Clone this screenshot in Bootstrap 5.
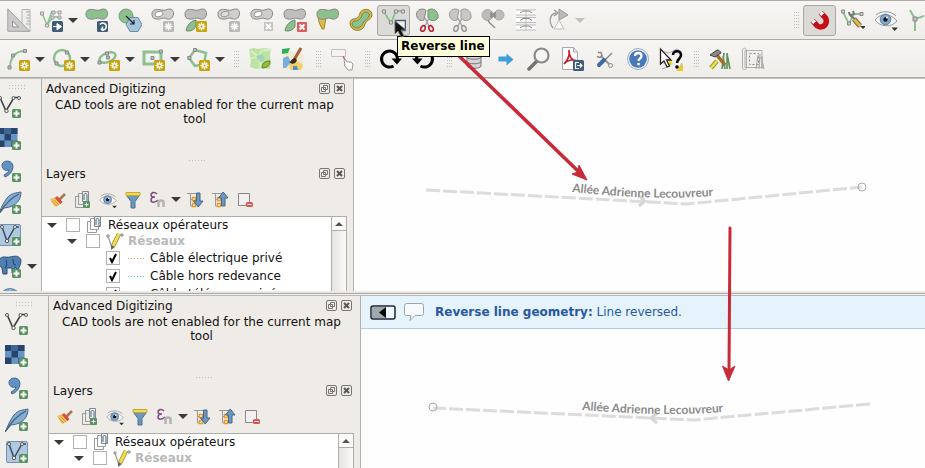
<!DOCTYPE html>
<html lang="fr">
<head>
<meta charset="utf-8">
<meta name="viewport" content="width=device-width, initial-scale=1">
<title>Reverse line</title>
<link href="https://cdn.jsdelivr.net/npm/bootstrap@5.3.0/dist/css/bootstrap.min.css" rel="stylesheet">
<style>
  body { font: 12px/14px "DejaVu Sans", sans-serif; color: #111; background: #efece8; }
  button, input { font: inherit; }
  svg { display: block; flex: none; }
  .ico { width: 24px; height: 24px; }
  .ico-s { width: 18px; height: 18px; }
  .bar { background: linear-gradient(#f8f6f4, #efedea); border-bottom: 1px solid #aeaba8; overflow: hidden; padding-left: 2px; }
  .bar-a { border-top: 1px solid #aeaba8; height: 40px; }
  .bar-b { height: 38px; padding-top: 1px; }
  .bar-end { height: 1px; background: #c4c1be; }
  .tool { flex: none; width: 33px; height: 31px; padding: 0; border: 1px solid transparent; border-radius: 3px; background: none; display: flex; align-items: center; justify-content: center; overflow: hidden; }
  .tool.down { background: #dcdad7; border-color: #aaa7a3; }
  .drop { flex: none; width: 12px; height: 31px; padding: 0; border: 0; background: none; display: flex; align-items: center; justify-content: center; }
  .bar .drop { padding-right: 2px; }
  .drop::before, .fold::before { content: ""; border: 5px solid transparent; border-top-color: #3b3a38; border-bottom: 0; }
  .drop.off::before { border-top-color: #c3c1be; }
  .tail { width: 23px; justify-content: flex-start; }
  .grip { flex: none; width: 16px; height: 17px; padding-left: 7px; }
  .grip::before, .grip-h { content: ""; display: block; width: 5px; height: 17px; background: conic-gradient(from 270deg at 1px 1px, #c0bdb9 90deg, transparent 0) 0 0 / 2px 3px; }
  .grip-h { width: 17px; height: 4px; background-size: 3px 3px; }
  .dock .grip-h { height: 1px; margin-bottom: 3px; }
  .pane { min-height: 0; overflow: hidden; }
  .pane-a { flex: 212 1 0; margin-left: -7px; }
  .pane-b { flex: 172 1 0; }
  .gap-strip { height: 5px; background: #eae8e4; border-bottom: 1px solid #bbb8b5; box-shadow: inset 0 -1px #f4f2f0, inset 0 -2px #aaa7a4; z-index: 1; }
  .side { flex: none; width: 48px; background: #f1efec; }
  .side .tool { height: 32px; }
  .side .grip-h { margin: 6px 0 2px 16px; }
  .dock { flex: none; width: 313px; border: solid #b3b0ac; border-width: 0 1px; }
  .dock-title { height: 19px; padding: 0 8px 0 4px; }
  .dock-note { height: 62px; padding: 0 14px 0 8px; text-align: center; }
  .dock-tools { height: 33px; padding-left: 3px; }
  .dock-tools .tool { width: 25px; height: 24px; }
  .mini { width: 11px; height: 11px; padding: 0; border: 0; background: none; }
  .tree { width: 305px; border: 1px solid #b0ada9; border-left: 0; background: #fff; }
  .tree ul { list-style: none; margin: 0; padding: 0; min-width: 0; }
  .tree li { display: flex; align-items: center; white-space: nowrap; height: 18px; padding-left: 64px; }
  .tree li.lv1 { height: 16px; padding-left: 4px; }
  .tree li.lv2 { height: 16px; padding-left: 24px; color: #b9b9b9; font-weight: bold; }
  .tree li.lv1 label, .tree li.lv2 label { margin-left: 4px; }
  .fold { width: 12px; height: 12px; padding: 0; border: 0; background: none; display: flex; align-items: center; justify-content: center; margin-right: 8px; }
  .tick { appearance: none; flex: none; width: 14px; height: 14px; margin: 0 6px 0 0; border: 1px solid #b3b1ad; background: #fff; }
  .tick:checked { background: #fff url("data:image/svg+xml,%3Csvg xmlns='http://www.w3.org/2000/svg' viewBox='0 0 12 12'%3E%3Cpath d='M3 6l2 4L9 2' fill='none' stroke='%23000' stroke-width='2'/%3E%3C/svg%3E"); }
  .tree label { margin-left: 5px; }
  .dash { width: 17px; height: 1px; background: repeating-linear-gradient(90deg, #cfae4e 0 1px, #fff 1px 3px); }
  .dash.blue { background: repeating-linear-gradient(90deg, #4fbfdc 0 1px, #fff 1px 3px); }
  .scroller { width: 15px; border-left: 1px solid #b0ada9; background: linear-gradient(90deg, #e6e4e1, #fbfaf9); }
  .scroller button { width: 14px; height: 14px; padding: 0; border: 0; border-bottom: 1px solid #b0ada9; background: #fbfaf9; display: flex; align-items: center; justify-content: center; }
  .scroller button::before { content: ""; border: 4px solid transparent; border-bottom-color: #555; border-top: 0; }
  .canvas { background: #fefefe; min-width: 0; }
  .map-art { left: 0; top: 0; width: 100%; height: 100%; }
  .map-art text { font: bold 12px Lato, sans-serif; fill: #8b8b8b; }
  .message { height: 33px; background: #e4f3fc; border-bottom: 1px solid #b4cce0; color: #2a57a0; padding-left: 9px; }
  .bubble { margin: 0 10px 0 7px; }
  .tip { left: 397px; top: 36px; padding: 2px 4px 3px 3px; background: #ffffdc; border: 1px solid #000; color: #000; font-weight: bold; z-index: 5; }
  .pointer { left: 394px; top: 20px; width: 13px; height: 18px; z-index: 6; }
  .arrows { left: 0; top: 0; width: 925px; height: 468px; z-index: 4; pointer-events: none; }
</style>
<script src="https://cdn.jsdelivr.net/npm/bootstrap@5.3.0/dist/js/bootstrap.bundle.min.js" defer></script>
</head>
<body class="vh-100 overflow-hidden d-flex flex-column position-relative">

<svg width="0" height="0" class="position-absolute" aria-hidden="true">
  <defs>
    <g id="gold"><rect x="12" y="13" width="11" height="11" rx="1.5" fill="#c8a20a"/><path d="M17.500 14.500v8M13.500 18.500h8M14.700 15.700l5.600 5.600M20.300 15.700l-5.600 5.600" stroke="#fff" stroke-width="1.300"/><circle cx="17.500" cy="18.500" r="1.500" fill="#c8a20a" stroke="#fff"/></g>
    <g id="greystar"><rect x="12" y="13" width="11" height="11" rx="1.500" fill="#b9b8b6"/><path d="M17.500 14.500v8M13.500 18.500h8M14.700 15.700l5.600 5.600M20.300 15.700l-5.600 5.600" stroke="#fff" stroke-width="1.300"/></g>
    <g id="navy"><rect x="12" y="13" width="11" height="11" rx="1.500" fill="#3f5d76"/></g>
    <g id="plus"><rect x="14" y="14" width="9" height="9" rx="1.500" fill="#5a9361"/><path d="M18.500 15.500v6M15.500 18.500h6" stroke="#fff" stroke-width="2"/></g>
    <path id="blob" d="M1 6C1 2 4 1 8 1.500C11 2 13 3 16 1.500C20 0 23 2 22.500 6C22 11 18 12 15 10.500C12 9 9 12 5 11C2 10.500 1 9 1 6Z" stroke="#8a8886"/>
    <path id="leaf" d="M12 12C7 13 3 17 2 22.500C5 24 11 22 12 18Z" fill="#8cc08f" stroke="#67886a"/>
    <g id="cut" fill="none" stroke-width="1.600"><path d="M10 10L14.500 19M14 10L9.500 19" stroke="#aaa"/><ellipse cx="8" cy="20.500" rx="2" ry="3" transform="rotate(25 8 20.500)"/><ellipse cx="16" cy="20.500" rx="2" ry="3" transform="rotate(-25 16 20.500)"/></g>
  </defs>
  <symbol id="i-ruler" viewBox="0 0 24 24"><path d="M15 1.500H23V23H15z" fill="#eee" stroke="#b5b3b1"/><path d="M19 4h4M20 7h3M19 10h4M20 13h3M19 16h4" stroke="#aaa"/><path d="M.800.800V23.300H22.800z" fill="#ccc" stroke="#a3a2a0"/><path d="M5.500 13v6h6z" fill="#f3f1ef" stroke="#908f8d"/></symbol>
  <symbol id="i-vmove" viewBox="0 0 24 24"><path d="M2 5l5 12 5-14M7 17l6-8 8 0" fill="none" stroke="#8cc08f" stroke-width="1.500"/><path d="M13 4h6" stroke="#bbb"/><g fill="#ddd" stroke="#999"><path d="M.500 4h3v3h-3zM12 3h3v3h-3zM18 3h3v3h-3zM11 8h3v3h-3zM18 8h3v3h-3zM5.500 16h3v3h-3z"/></g><use href="#navy"/><path d="M13 18.500h4v-3l4.500 3-4.500 3.500v-3.500z" fill="#fff" stroke="#fff"/></symbol>
  <symbol id="i-rotate" viewBox="0 0 24 24"><use href="#blob" fill="#8cc08f"/><use href="#navy"/><path d="M15 16.500a3.500 3.500 0 1 1 2 5.500l-1-1.500M17.500 22v-3.500" fill="none" stroke="#fff" stroke-width="1.500"/></symbol>
  <symbol id="i-simplify" viewBox="0 0 24 24"><circle cx="8" cy="8" r="7" fill="#8cc08f" stroke="#789d7a"/><path d="M12 9.500h8l4 7-4 7h-8l-4-7z" fill="#a5c5dd" stroke="#6b8ca5"/><path d="M8 8l8 8M16 12v4h-4" fill="none" stroke="#222" stroke-width="1.200"/></symbol>
  <symbol id="i-ring" viewBox="0 0 24 24"><use href="#blob" fill="#cfcecc"/><ellipse cx="8" cy="6" rx="4" ry="2.600" fill="#fff" stroke="#999" transform="rotate(-15 8 6)"/><use href="#greystar"/></symbol>
  <symbol id="i-part" viewBox="0 0 24 24"><use href="#blob" fill="#bfbebc"/><use href="#leaf"/><use href="#gold"/></symbol>
  <symbol id="i-fill" viewBox="0 0 24 24"><use href="#blob" fill="#cfcecc"/><ellipse cx="8" cy="6" rx="4" ry="2.600" fill="#ddd" stroke="#999" transform="rotate(-15 8 6)"/><use href="#greystar"/></symbol>
  <symbol id="i-delring" viewBox="0 0 24 24"><use href="#blob" fill="#cfcecc"/><ellipse cx="8" cy="6" rx="4" ry="2.600" fill="#fff" stroke="#999" transform="rotate(-15 8 6)"/><path d="M14 14h9v9h-9z" fill="#c6c4c2"/><path d="M16 16l5 5m0-5l-5 5" stroke="#fff" stroke-width="2"/></symbol>
  <symbol id="i-delpart" viewBox="0 0 24 24"><use href="#blob" fill="#bfbebc"/><use href="#leaf"/><rect x="14" y="14" width="10" height="10" rx="1" fill="#dc5d5b"/><path d="M16.500 16.500l5 5m0-5l-5 5" stroke="#fff" stroke-width="2"/></symbol>
  <symbol id="i-reshape" viewBox="0 0 24 24"><path d="M2 9l1 5 3 7h2l2-11z" fill="#d9bb4e" stroke="#a68a28"/><use href="#blob" fill="#8cc08f"/></symbol>
  <symbol id="i-offset" viewBox="0 0 24 24"><path d="M4 11C8 11 10 9 11 5C13 0 22 0 23 6C23 12 18 11 16 16C15 22 8 24 4 21C0 18 0 12 4 11Z" fill="#d9b93a" stroke="#8c7d40"/><path d="M6 13C10 13 12 10 13 7C14 3 20 3 20.500 7C20 11 16 11 14 15C13 19 8 21 5 19C2 17 3 13 6 13Z" fill="#8cc08f" stroke="#6d8b5d"/></symbol>
  <symbol id="i-reverse" viewBox="0 0 24 24"><path d="M2 4l7 11 5-12h8" fill="none" stroke="#8cc08f" stroke-width="1.800"/><g fill="#ddd" stroke="#888"><path d="M.500 2h3v3h-3zM12.500 2h3v3h-3zM19.500 2h3v3h-3zM7.500 13h3v3h-3z"/></g><path d="M13.500 12.500h10v10h-10z" fill="#eee" stroke="#3f5d76" stroke-width="1.500"/></symbol>
  <symbol id="i-split" viewBox="0 0 24 24"><path d="M11 2L9 12C5 14 1 10 1.500 6C2 1 7 0 11 2z" fill="#bdbcba" stroke="#8a8886"/><path d="M13 2v8c3 4 8 3 10 0C24 3 18-1 13 2z" fill="#8cc08f" stroke="#708b72"/><use href="#cut" stroke="#bb2230"/></symbol>
  <symbol id="i-splitp" viewBox="0 0 24 24"><path d="M11 2L9 12C5 14 1 10 1.500 6C2 1 7 0 11 2zM13 2v8c3 4 8 3 10 0C24 3 18-1 13 2z" fill="#c9c7c5" stroke="#999"/><use href="#cut" stroke="#999"/></symbol>
  <symbol id="i-merge" viewBox="0 0 24 24"><circle cx="6.500" cy="7" r="5.500" fill="#bebcba" stroke="#aaa"/><circle cx="18" cy="7" r="5" fill="#bebcba" stroke="#aaa"/><path d="M10 4v6M14 4v6M10 6h4M10 8h4M7 12c1 4 5 5 7 8" fill="none" stroke="#888" stroke-width="1.300"/></symbol>
  <symbol id="i-mattr" viewBox="0 0 24 24"><path d="M2 2h20v5H2zM2 9.500h20v5H2zM2 17h20v5H2z" fill="#fff"/><path d="M2 2h20M2 7h20M2 9.500h20M2 14.500h20M2 17h20M2 22h20M12 2v20" stroke="#bbb"/><path d="M6 5l3-2h6l3 2M6 12.500l3-2h6l3 2M6 20l3-2h6l3 2" fill="none" stroke="#888"/></symbol>
  <symbol id="i-rotsym" viewBox="0 0 24 24"><path d="M6 20C1 13 3 6 9 5M7 2l4 3-4 3" fill="none" stroke="#999" stroke-width="1.300"/><path d="M12 1l9 6-9 5z" fill="#bbb" stroke="#999"/><path d="M12 12l-5 9h10z" fill="#f8f6f4" stroke="#c4c2c0"/></symbol>
  <symbol id="i-magnet" viewBox="0 0 24 24"><path d="M4.500 12.500l5 5.500a5.800 5.800 0 0 0 8-8l-5-5.500" fill="none" stroke="#c50f15" stroke-width="5.500"/><path d="M4.500 12.500l2.200 2.200M12.500 4.500l2.200 2.200" stroke="#fff" stroke-width="4"/></symbol>
  <symbol id="i-vtool" viewBox="0 0 24 24"><path d="M2 4l6 12 5-10h8" fill="none" stroke="#8cc08f" stroke-width="1.800"/><path d="M.500 2h3v3h-3zM6.500 14h3v3h-3zM19 4.500h3v3h-3z" fill="#ccc" stroke="#888"/><path d="M13 11l6 7" stroke="#7b6536" stroke-width="5"/><path d="M13 11l6 7" stroke="#dfba54" stroke-width="3"/><path d="M8 4c0 4 2 4 6 7M12 3l1 3-3 1" fill="none" stroke="#777" stroke-width="2"/><path d="M19 18h6l-3 3z" fill="#333"/></symbol>
  <symbol id="i-eye" viewBox="0 0 24 24"><path d="M1 12C6 5 17 5 23 13C17 20 6 19 1 12z" fill="#f6f6f6" stroke="#999"/><path d="M2 7C8 2 17 3 22 8" fill="none" stroke="#999"/><circle cx="11.500" cy="11.500" r="5.300" fill="#7fa8cc" stroke="#56789a"/><circle cx="11.500" cy="11.500" r="2.200" fill="#111"/><circle cx="13" cy="9.500" r="1" fill="#fff"/><path d="M17.500 19.500h6.500l-3.300 3.500z" fill="#333"/></symbol>
  <symbol id="i-topo" viewBox="0 0 24 24"><path d="M7 2l5 9 12-4M12 11v12" fill="none" stroke="#8cc08f" stroke-width="2"/><path d="M10 9h4v4h-4z" fill="#bbb" stroke="#888"/></symbol>

  <symbol id="i-arc" viewBox="0 0 24 24"><path d="M3 21C3 11 8 4 18 4" fill="none" stroke="#8cc08f" stroke-width="2"/><path d="M1 19h3v3h-3zM4.500 7h3v3h-3zM16.500 2.500h3v3h-3z" fill="#bbb" stroke="#888"/><use href="#gold"/></symbol>
  <symbol id="i-circ" viewBox="0 0 24 24"><circle cx="10" cy="11" r="8" fill="none" stroke="#8cc08f" stroke-width="2.500"/><path d="M13.500 4h3v3h-3zM3 15h3v3h-3z" fill="#bbb" stroke="#888"/><use href="#gold"/></symbol>
  <symbol id="i-ell" viewBox="0 0 24 24"><ellipse cx="10.500" cy="10.500" rx="8.500" ry="4.500" fill="none" stroke="#8cc08f" stroke-width="2.500" transform="rotate(-22 10.500 10.500)"/><path d="M8.500 5h3v3h-3zM9.500 9h3v3h-3zM1 14h3v3h-3z" fill="#bbb" stroke="#888"/><use href="#gold"/></symbol>
  <symbol id="i-rect" viewBox="0 0 24 24"><path d="M2 5h17v12H2z" fill="none" stroke="#8cc08f" stroke-width="3"/><path d="M17.500 3h3v3h-3zM9 9.500h3v3h-3z" fill="#bbb" stroke="#888"/><use href="#gold"/></symbol>
  <symbol id="i-poly" viewBox="0 0 24 24"><path d="M8 3l11 3-2 11-9 2-6-8z" fill="none" stroke="#8cc08f" stroke-width="2.500"/><path d="M6.500 1.500h3v3h-3zM.800 9.500h3v3h-3z" fill="#bbb" stroke="#888"/><use href="#gold"/></symbol>
  <symbol id="i-map1" viewBox="0 0 24 24"><path d="M1 2l5-1 4 1 6-1 7 1-1 7 1 6-1 7-7-1-7 1-6-2 1-6-1-6z" fill="#bde2a4"/><path d="M2 12c5-3 8 0 10-5s6-4 10-4M3 4l8 6 2 12" fill="none" stroke="#d8efc6" stroke-width="2"/><path d="M8 9l6-2 3 5-5 3z" fill="#9fd3b8"/><path d="M14 21c0-6 4-7 8-7 0 5-3 7-8 7z" fill="#94bb35" stroke="#5e852b"/></symbol>
  <symbol id="i-map2" viewBox="0 0 24 24"><path d="M2 8l7-4 13 3v15H1z" fill="#f0ead4"/><path d="M1 2l8-1-2 5-6 1z" fill="#2cb15a"/><path d="M2 11l5-2 3 6-5 6H2z" fill="#7baee0"/><path d="M8 17l8-3 6 4-2 5H9z" fill="#f0cf65"/><path d="M12 19l4 0 1 4h-5z" fill="#578bd1"/><path d="M20 1l-7 12" stroke="#a65c2d" stroke-width="3"/><path d="M14 11c-3 0-4 4-6 4 3 3 7 2 8-2z" fill="#3c2a20"/></symbol>
  <symbol id="i-pick" viewBox="0 0 24 24"><path d="M1.500 2.500h14v7h-14z" fill="#f6f4f2" stroke="#c2c0be"/><path d="M13 9l3 6" stroke="#c86b6b" stroke-width="1.500"/><path d="M14 13l1 5-1 0 4 5h4l1-6-2-2-4 0-2-3z" fill="#fff" stroke="#999"/></symbol>
  <symbol id="i-redo" viewBox="0 0 24 24"><path d="M14.500 19A8 8 0 1 1 18.500 12" fill="none" stroke="#000" stroke-width="3"/><path d="M12.500 11.500h10.500l-5 6z" fill="#000"/></symbol>
  <symbol id="i-undo" viewBox="0 0 24 24"><path d="M8.500 19A8 8 0 1 0 4.500 12" fill="none" stroke="#000" stroke-width="3"/><path d="M0 11.500h10.500l-5 6z" fill="#000"/></symbol>
  <symbol id="i-db" viewBox="0 0 24 24"><path d="M6 6v13c0 3 14 3 14 0V6z" fill="#d5d5d5" stroke="#777"/><path d="M6 10c0 3 14 3 14 0M6 14.500c0 3 14 3 14 0" fill="none" stroke="#777"/><ellipse cx="13" cy="6" rx="7" ry="2" fill="#eee" stroke="#777"/></symbol>
  <symbol id="i-go" viewBox="0 0 24 24"><path d="M4.500 9.500h8V6.500l7 6-7 6v-4h-8z" fill="#3f9fd6"/></symbol>
  <symbol id="i-lens" viewBox="0 0 24 24"><path d="M10 14l-8 8" stroke="#77716d" stroke-width="3.500" stroke-linecap="round"/><circle cx="14.500" cy="8.500" r="7" fill="#f4f6f6" stroke="#8b8988" stroke-width="2.200"/></symbol>
  <symbol id="i-pdf" viewBox="0 0 24 24"><path d="M2.500.500h11l4 4.500v17.500h-15z" fill="#fff" stroke="#aaa"/><path d="M13.500.500v4.500h4" fill="none" stroke="#aaa"/><path d="M9 3c1 7-3 12-5 14 3-4 9-5 12-3C11 13 9 8 9 3z" fill="none" stroke="#c42531" stroke-width="1.700"/><use href="#navy" x="1"/><path d="M19 15.500h-3.500v6H19M17 18.500h5m-2-2l2 2-2 2" fill="none" stroke="#fff" stroke-width="1.200"/></symbol>
  <symbol id="i-tools" viewBox="0 0 24 24"><path d="M8 9l9 9" stroke="#999" stroke-width="2"/><path d="M5 5.500l3 0 1 3-2 2-3-1" fill="none" stroke="#888" stroke-width="1.500"/><circle cx="17.500" cy="18.500" r="2" fill="#eee" stroke="#888"/><path d="M19 6L12 13" stroke="#888" stroke-width="1.500"/><path d="M11 13l-5 5" stroke="#3f6ba5" stroke-width="4" stroke-linecap="round"/></symbol>
  <symbol id="i-help" viewBox="0 0 24 24"><circle cx="12" cy="12" r="10.500" fill="#eef3fa" stroke="#9aacc7"/><circle cx="12" cy="12" r="8.800" fill="#4a78b9"/><path d="M9 9c0-4 6.500-4 6.500 0 0 2.500-3 2.500-3 5" fill="none" stroke="#fff" stroke-width="2.300"/><path d="M11.300 16h2.500v2.300h-2.500z" fill="#fff"/></symbol>
  <symbol id="i-what" viewBox="0 0 24 24"><path d="M2 4l8 2 8-4 5 3M3 22l8-3M1 12h4M20 22l3-6" stroke="#aaa" fill="none"/><path d="M17 24l7-7v7z" fill="#f3c913"/><path d="M10 10l4 7-4 2z" fill="#f3d823"/><path d="M1.500 2v15l3.500-3 3 6 2.500-1-3-6h4.500z" fill="#fff" stroke="#222" stroke-width="1.300"/><path d="M14 8c0-5 8-5 8 0 0 4-4 4-4 8" fill="none" stroke="#000" stroke-width="2.600"/><circle cx="18" cy="20" r="1.800"/></symbol>
  <symbol id="i-hammer" viewBox="0 0 24 24"><path d="M14 22l2-16M17 22l-2-13M19 22l0-16M22 22l-3-15" stroke="#5c9760" stroke-width="1.700"/><path d="M8 7l9 11" stroke="#a86a2a" stroke-width="3.500"/><path d="M2 8l7-5c2 0 3 1 4 3l-6 4z" fill="#888" stroke="#444"/><path d="M9 14l-6 7" stroke="#989a2c" stroke-width="4.500"/><path d="M9 14l-6 7" stroke="#e8e34a" stroke-width="2.500"/></symbol>
  <symbol id="i-scroll" viewBox="0 0 24 24"><path d="M4 3.500h17v17H4zM1.500 2c3-2 4 0 4 2v17c0 2-4 2-4 0z" fill="#f1efed" stroke="#b3b1af"/><path d="M8.500 6.500h9v11h-9z" fill="none" stroke="#888" stroke-dasharray="2 2"/><path d="M15 22l2-14M18 22l1-15M21 22l0-13M23 22l-3-12" stroke="#aaa" stroke-width="1.200"/></symbol>

  <symbol id="s-vec" viewBox="0 0 24 24"><path d="M2 2.500L8 16l8-13.500h5" fill="none" stroke="#3c4145" stroke-width="1.600"/><g fill="#fff" stroke="#555"><circle cx="2" cy="3" r="1.500"/><circle cx="8.500" cy="16" r="1.700"/><circle cx="15.500" cy="3" r="1.500"/><circle cx="21" cy="3" r="1.500"/></g><use href="#plus"/></symbol>
  <symbol id="s-ras" viewBox="0 0 24 24"><path d="M0 1h19.500v19H0z" fill="#6794c2"/><path d="M0 1h6.500v6H0zM13 1h6.500v6H13zM6.500 7H13v6.500H6.500zM0 13.500h6.500V20H0z" fill="#26456c"/><path d="M13 13.500h6.500V20H13zM6.500 1H13v6H6.500z" fill="#3f6695"/><use href="#plus"/></symbol>
  <symbol id="s-com" viewBox="0 0 24 24"><path d="M4 6.500C4 1 14 0 15 7C15 12 12 16 7 18L6 16C9 14 11 13 10.500 11C7 12 4 10 4 6.500z" fill="#6292c4" stroke="#45678c"/><use href="#plus"/></symbol>
  <symbol id="s-fea" viewBox="0 0 24 24"><path d="M1 23C3 16 6 11 9 7C13 2 18 2 23 1C23 8 19 16 6 17z" fill="#82add5" stroke="#4b6a87"/><path d="M0 24C6 14 13 7 21 3" fill="none" stroke="#445e78" stroke-width="1.300"/><use href="#plus"/></symbol>
  <symbol id="s-box" viewBox="0 0 24 24"><rect x="1.500" y="1.500" width="21" height="21" rx="1.500" fill="#b0c8e0" stroke="#7391b0"/><path d="M4 4l5 14 8-14h4" fill="none" stroke="#3c4c5d" stroke-width="1.500"/><g fill="#fff" stroke="#555"><circle cx="4" cy="4" r="1.500"/><circle cx="9" cy="18" r="1.700"/><circle cx="17" cy="4" r="1.500"/></g><use href="#plus"/></symbol>
  <symbol id="s-ele" viewBox="0 0 24 24"><path d="M1 5c3-5 7-2 11-3s9-2 11 3c0 5-2 7-3 10l-3-3v7l-3-1v-5H9v6H5l-1-6C1 11 0 8 1 5z" fill="#4f80b3" stroke="#2d4c70"/><path d="M8 5c1 3 1 6-1 8M15 4c0 3 1 6 3 6" fill="none" stroke="#2d4c70" stroke-width="1.300"/><use href="#plus"/></symbol>
  <symbol id="s-glo" viewBox="0 0 24 24"><circle cx="12" cy="12" r="10.500" fill="#7ba4ce" stroke="#6282a5"/><path d="M2 10h20M12 2v20M5 5c4 3 10 3 14 0" fill="none" stroke="#bcd2e8"/></symbol>

  <symbol id="d-brush" viewBox="0 0 18 18"><path d="M10 9l6-6" stroke="#a5794a" stroke-width="2.500"/><path d="M1 8l6-2 6 6-6 4-2-1z" fill="#eec25e"/><path d="M3 10l5 5M5 9l5 5" stroke="#d79a35"/><path d="M7 6l5.500 6" stroke="#d94d3c" stroke-width="3"/></symbol>
  <symbol id="d-group" viewBox="0 0 18 18"><path d="M5.500 5.500h-4v11h9v-3M8 2.500H4.500v11h8v-3" fill="none" stroke="#999"/><path d="M8.500.500h6v10h-6z" fill="#eee" stroke="#888"/><path d="M10 9V4c0-2 3-2 3 0v7" fill="none" stroke="#456a8a"/></symbol>
  <symbol id="d-add" viewBox="0 0 18 18"><use href="#d-group" width="18" height="18"/><rect x="9" y="10" width="7" height="7" rx="1" fill="#5a9361"/><path d="M12.500 11.500v4M10.500 13.500h4" stroke="#fff"/></symbol>
  <symbol id="d-filter" viewBox="0 0 18 18"><path d="M2.500 4.500l4.500 6v6.500h4v-6.500l4.500-6z" fill="#6e97c0" stroke="#50708f"/><path d="M2 1.500h14v3H2z" fill="#f3dd4d" stroke="#c3a93a"/></symbol>
  <symbol id="d-eps" viewBox="0 0 18 18"><path d="M8 3C5 0 2 2 2 4c0 2 2 2 4 2-3 0-4 1-4 3 0 3 4 3 7 0" fill="none" stroke="#7d4f80" stroke-width="1.600"/><path d="M9.500 16V11c0-2 5-2 5 0v5" fill="none" stroke="#b5b3b1" stroke-width="2.500"/></symbol>
  <symbol id="d-tree" viewBox="0 0 18 18"><path d="M1 2.500h13M4.500 2v13h4M4.500 8.500h4" fill="none" stroke="#999"/><path d="M6.500 6.500h3v3h-3zM6.500 12.500h3v3h-3z" fill="#fff" stroke="#e39b2d" stroke-width="1.500"/></symbol>
  <symbol id="d-down" viewBox="0 0 18 18"><use href="#d-tree" width="18" height="18"/><path d="M10.500 2h3.500v8h3l-4.800 6L7.500 10h3z" fill="#6e97c0" stroke="#45678a"/></symbol>
  <symbol id="d-up" viewBox="0 0 18 18"><use href="#d-tree" width="18" height="18"/><path d="M10.500 15h3.500V7h3l-4.800-6L7.500 7h3z" fill="#6e97c0" stroke="#45678a"/></symbol>
  <symbol id="d-del" viewBox="0 0 18 18"><path d="M2.500 2.500h11v12h-11z" fill="#f3f1ef" stroke="#888"/><rect x="10" y="11" width="7" height="5" rx="1.500" fill="#df5554"/><path d="M11.500 13.500h4" stroke="#fff"/></symbol>
  <symbol id="d-pencil" viewBox="0 0 18 18"><path d="M2 4l4 12 8-13h3" fill="none" stroke="#999" stroke-width="1.200"/><path d="M13 2L7 14" stroke="#9c8a2b" stroke-width="4.500"/><path d="M13 2L7 14" stroke="#f0dd4e" stroke-width="3"/><path d="M5 13l4 2-4 3z" fill="#666"/><path d="M1 3h2v2H1zM15 2h2v2h-2z" fill="#fff" stroke="#888"/></symbol>
  <symbol id="w-float" viewBox="0 0 11 11"><rect x=".500" y=".500" width="10" height="10" rx="1.500" fill="none" stroke="#777"/><path d="M4.500 2.500h4v4h-4zM2.500 4.500h4v4h-4z" fill="#efece8" stroke="#777"/></symbol>
  <symbol id="w-close" viewBox="0 0 11 11"><rect x=".500" y=".500" width="10" height="10" rx="1.500" fill="none" stroke="#777"/><path d="M3 3l5 5M8 3l-5 5" stroke="#555" stroke-width="2"/></symbol>
</svg>

<nav class="bar bar-a d-flex align-items-center flex-shrink-0" aria-label="Digitizing">
  <button class="tool" aria-label="CAD"><svg class="ico"><use href="#i-ruler"/></svg></button>
  <button class="tool" aria-label="Move"><svg class="ico"><use href="#i-vmove"/></svg></button><button class="drop" aria-label="More"></button>
  <button class="tool" aria-label="Rotate"><svg class="ico"><use href="#i-rotate"/></svg></button>
  <button class="tool" aria-label="Simplify"><svg class="ico"><use href="#i-simplify"/></svg></button>
  <button class="tool" aria-label="Add ring"><svg class="ico"><use href="#i-ring"/></svg></button>
  <button class="tool" aria-label="Add part"><svg class="ico"><use href="#i-part"/></svg></button>
  <button class="tool" aria-label="Fill ring"><svg class="ico"><use href="#i-fill"/></svg></button>
  <button class="tool" aria-label="Delete ring"><svg class="ico"><use href="#i-delring"/></svg></button>
  <button class="tool" aria-label="Delete part"><svg class="ico"><use href="#i-delpart"/></svg></button>
  <button class="tool" aria-label="Reshape"><svg class="ico"><use href="#i-reshape"/></svg></button>
  <button class="tool" aria-label="Offset"><svg class="ico"><use href="#i-offset"/></svg></button>
  <button class="tool down" aria-label="Reverse line"><svg class="ico"><use href="#i-reverse"/></svg></button>
  <button class="tool" aria-label="Split"><svg class="ico"><use href="#i-split"/></svg></button>
  <button class="tool" aria-label="Split parts"><svg class="ico"><use href="#i-splitp"/></svg></button>
  <button class="tool" aria-label="Merge"><svg class="ico"><use href="#i-merge"/></svg></button>
  <button class="tool" aria-label="Merge attributes"><svg class="ico"><use href="#i-mattr"/></svg></button>
  <button class="tool" aria-label="Rotate symbols"><svg class="ico"><use href="#i-rotsym"/></svg></button><button class="drop off" aria-label="More"></button>
  <span class="grip ms-auto"></span>
  <button class="tool down" aria-label="Snapping"><svg class="ico"><use href="#i-magnet"/></svg></button>
  <button class="tool" aria-label="Vertex tool"><svg class="ico"><use href="#i-vtool"/></svg></button>
  <button class="tool" aria-label="Visibility"><svg class="ico"><use href="#i-eye"/></svg></button>
  <button class="tool tail" aria-label="Topology"><svg class="ico"><use href="#i-topo"/></svg></button>
</nav>

<nav class="bar bar-b d-flex align-items-center flex-shrink-0" aria-label="Shapes">
  <button class="tool" aria-label="Curve"><svg class="ico"><use href="#i-arc"/></svg></button><button class="drop" aria-label="More"></button>
  <button class="tool" aria-label="Circle"><svg class="ico"><use href="#i-circ"/></svg></button><button class="drop" aria-label="More"></button>
  <button class="tool" aria-label="Ellipse"><svg class="ico"><use href="#i-ell"/></svg></button><button class="drop" aria-label="More"></button>
  <button class="tool" aria-label="Rectangle"><svg class="ico"><use href="#i-rect"/></svg></button><button class="drop" aria-label="More"></button>
  <button class="tool" aria-label="Polygon"><svg class="ico"><use href="#i-poly"/></svg></button><button class="drop" aria-label="More"></button>
  <span class="grip"></span>
  <button class="tool" aria-label="Map"><svg class="ico"><use href="#i-map1"/></svg></button>
  <button class="tool" aria-label="Map style"><svg class="ico"><use href="#i-map2"/></svg></button>
  <span class="grip"></span>
  <button class="tool" aria-label="Pick"><svg class="ico"><use href="#i-pick"/></svg></button>
  <span class="grip"></span>
  <button class="tool" aria-label="Redo"><svg class="ico"><use href="#i-redo"/></svg></button>
  <button class="tool" aria-label="Undo"><svg class="ico"><use href="#i-undo"/></svg></button>
  <span class="grip"></span>
  <button class="tool" aria-label="Database"><svg class="ico"><use href="#i-db"/></svg></button>
  <button class="tool" aria-label="Go"><svg class="ico"><use href="#i-go"/></svg></button>
  <button class="tool" aria-label="Search"><svg class="ico"><use href="#i-lens"/></svg></button>
  <button class="tool" aria-label="Export PDF"><svg class="ico"><use href="#i-pdf"/></svg></button>
  <button class="tool" aria-label="Options"><svg class="ico"><use href="#i-tools"/></svg></button>
  <button class="tool" aria-label="Help"><svg class="ico"><use href="#i-help"/></svg></button>
  <button class="tool" aria-label="What's this"><svg class="ico"><use href="#i-what"/></svg></button>
  <span class="grip"></span>
  <button class="tool" aria-label="Build"><svg class="ico"><use href="#i-hammer"/></svg></button>
  <button class="tool" aria-label="Plan"><svg class="ico"><use href="#i-scroll"/></svg></button>
</nav>
<div class="bar-end flex-shrink-0"></div>

<section class="pane pane-a d-flex">
  <div class="side">
    <div class="grip-h"></div>
    <button class="tool" aria-label="Add vector layer"><svg class="ico"><use href="#s-vec"/></svg></button>
    <button class="tool" aria-label="Add raster layer"><svg class="ico"><use href="#s-ras"/></svg></button>
    <button class="tool" aria-label="Add text layer"><svg class="ico"><use href="#s-com"/></svg></button>
    <button class="tool" aria-label="Add SpatiaLite layer"><svg class="ico"><use href="#s-fea"/></svg></button>
    <button class="tool" aria-label="Add virtual layer"><svg class="ico"><use href="#s-box"/></svg></button>
    <div class="d-flex"><button class="tool" aria-label="Add PostGIS layer"><svg class="ico"><use href="#s-ele"/></svg></button><button class="drop" aria-label="More"></button></div>
    <button class="tool" aria-label="Add WMS layer"><svg class="ico"><use href="#s-glo"/></svg></button>
  </div>
  <div class="dock">
    <div class="dock-title d-flex align-items-center gap-1"><span class="me-auto">Advanced Digitizing</span><button class="mini" aria-label="Float"><svg width="11" height="11"><use href="#w-float"/></svg></button><button class="mini" aria-label="Close"><svg width="11" height="11"><use href="#w-close"/></svg></button></div>
    <div class="dock-note">CAD tools are not enabled for the current map tool</div>
    <div class="grip-h mx-auto"></div>
    <div class="dock-title d-flex align-items-center gap-1"><span class="me-auto">Layers</span><button class="mini" aria-label="Float"><svg width="11" height="11"><use href="#w-float"/></svg></button><button class="mini" aria-label="Close"><svg width="11" height="11"><use href="#w-close"/></svg></button></div>
    <div class="dock-tools d-flex align-items-center">
      <button class="tool" aria-label="Style"><svg class="ico-s"><use href="#d-brush"/></svg></button>
      <button class="tool" aria-label="Add group"><svg class="ico-s"><use href="#d-add"/></svg></button>
      <button class="tool" aria-label="Themes"><svg class="ico-s"><use href="#i-eye"/></svg></button>
      <button class="tool" aria-label="Filter"><svg class="ico-s"><use href="#d-filter"/></svg></button>
      <button class="tool" aria-label="Expression filter"><svg class="ico-s"><use href="#d-eps"/></svg></button><button class="drop" aria-label="More"></button>
      <button class="tool" aria-label="Expand"><svg class="ico-s"><use href="#d-down"/></svg></button>
      <button class="tool" aria-label="Collapse"><svg class="ico-s"><use href="#d-up"/></svg></button>
      <button class="tool" aria-label="Remove"><svg class="ico-s"><use href="#d-del"/></svg></button>
    </div>
    <div class="tree d-flex">
      <ul class="flex-grow-1">
        <li class="lv1"><button class="fold" aria-label="Fold"></button><input class="tick" type="checkbox" id="a1"><svg class="ico-s"><use href="#d-group"/></svg><label for="a1">Réseaux opérateurs</label></li>
        <li class="lv2"><button class="fold" aria-label="Fold"></button><input class="tick" type="checkbox" id="a2"><svg class="ico-s"><use href="#d-pencil"/></svg><label for="a2">Réseaux</label></li>
        <li><input class="tick me-2" type="checkbox" id="a3" checked><span class="dash"></span><label for="a3">Câble électrique privé</label></li>
        <li><input class="tick me-2" type="checkbox" id="a4" checked><span class="dash blue"></span><label for="a4">Câble hors redevance</label></li>
        <li><input class="tick me-2" type="checkbox" id="a5" checked><span class="dash"></span><label for="a5">Câble télécoms privé</label></li>
      </ul>
      <div class="scroller"><button aria-label="Scroll up"></button></div>
    </div>
  </div>
  <main class="canvas flex-grow-1 position-relative">
    <svg class="map-art position-absolute">
      <path d="M72 111L333 125L508 108" fill="none" stroke="#dcdcdc" stroke-width="3" stroke-dasharray="14 3"/>
      <path d="M285 117l6 5-6 5" fill="none" stroke="#d6d6d6" stroke-width="3"/>
      <circle cx="508" cy="108" r="4" fill="none" stroke="#aaa"/>
      <path id="lab-a" d="M218 113C260 117 310 122 370 116" fill="none"/>
      <text><textPath href="#lab-a">Allée Adrienne Lecouvreur</textPath></text>
    </svg>
  </main>
</section>

<div class="gap-strip flex-shrink-0"></div>

<section class="pane pane-b d-flex">
  <div class="side">
    <div class="grip-h"></div>
    <button class="tool" aria-label="Add vector layer"><svg class="ico"><use href="#s-vec"/></svg></button>
    <button class="tool" aria-label="Add raster layer"><svg class="ico"><use href="#s-ras"/></svg></button>
    <button class="tool" aria-label="Add text layer"><svg class="ico"><use href="#s-com"/></svg></button>
    <button class="tool" aria-label="Add SpatiaLite layer"><svg class="ico"><use href="#s-fea"/></svg></button>
    <button class="tool" aria-label="Add virtual layer"><svg class="ico"><use href="#s-box"/></svg></button>
  </div>
  <div class="dock d-flex flex-column">
    <div class="dock-title d-flex align-items-center gap-1"><span class="me-auto">Advanced Digitizing</span><button class="mini" aria-label="Float"><svg width="11" height="11"><use href="#w-float"/></svg></button><button class="mini" aria-label="Close"><svg width="11" height="11"><use href="#w-close"/></svg></button></div>
    <div class="dock-note">CAD tools are not enabled for the current map tool</div>
    <div class="grip-h mx-auto"></div>
    <div class="dock-title d-flex align-items-center gap-1"><span class="me-auto">Layers</span><button class="mini" aria-label="Float"><svg width="11" height="11"><use href="#w-float"/></svg></button><button class="mini" aria-label="Close"><svg width="11" height="11"><use href="#w-close"/></svg></button></div>
    <div class="dock-tools d-flex align-items-center">
      <button class="tool" aria-label="Style"><svg class="ico-s"><use href="#d-brush"/></svg></button>
      <button class="tool" aria-label="Add group"><svg class="ico-s"><use href="#d-add"/></svg></button>
      <button class="tool" aria-label="Themes"><svg class="ico-s"><use href="#i-eye"/></svg></button>
      <button class="tool" aria-label="Filter"><svg class="ico-s"><use href="#d-filter"/></svg></button>
      <button class="tool" aria-label="Expression filter"><svg class="ico-s"><use href="#d-eps"/></svg></button><button class="drop" aria-label="More"></button>
      <button class="tool" aria-label="Expand"><svg class="ico-s"><use href="#d-down"/></svg></button>
      <button class="tool" aria-label="Collapse"><svg class="ico-s"><use href="#d-up"/></svg></button>
      <button class="tool" aria-label="Remove"><svg class="ico-s"><use href="#d-del"/></svg></button>
    </div>
    <div class="tree d-flex flex-grow-1 border-bottom-0">
      <ul class="flex-grow-1">
        <li class="lv1"><button class="fold" aria-label="Fold"></button><input class="tick" type="checkbox" id="b1"><svg class="ico-s"><use href="#d-group"/></svg><label for="b1">Réseaux opérateurs</label></li>
        <li class="lv2"><button class="fold" aria-label="Fold"></button><input class="tick" type="checkbox" id="b2"><svg class="ico-s"><use href="#d-pencil"/></svg><label for="b2">Réseaux</label></li>
      </ul>
      <div class="scroller"><button aria-label="Scroll up"></button></div>
    </div>
  </div>
  <main class="canvas flex-grow-1 position-relative">
    <svg class="map-art position-absolute">
      <path d="M509 108L333 124L72 112" fill="none" stroke="#dcdcdc" stroke-width="3" stroke-dasharray="14 3"/>
      <path d="M296 117l-6 5 6 5" fill="none" stroke="#d6d6d6" stroke-width="3"/>
      <circle cx="72" cy="111" r="4" fill="none" stroke="#aaa"/>
      <path id="lab-b" d="M221 114C263 117 313 121 373 115" fill="none"/>
      <text><textPath href="#lab-b">Allée Adrienne Lecouvreur</textPath></text>
    </svg>
    <div class="message position-relative d-flex align-items-center" role="status">
      <svg width="26" height="15" viewBox="0 0 26 15"><rect x="1" y="1" width="24" height="13" rx="2" fill="#eef8fd" stroke="#223" stroke-width="1.500"/><path d="M2 2h14v11H2z" fill="#9fa9ac"/><path d="M16 2v11L9 7.500z" fill="#000"/></svg>
      <svg class="bubble" width="22" height="20" viewBox="0 0 22 20"><path d="M3.500 1.500h15q2 0 2 2v8q0 2-2 2H12L7 18.500l1-5H3.500q-2 0-2-2v-8q0-2 2-2z" fill="#f8fbfd" stroke="#9aa5ac"/></svg>
      <span><b>Reverse line geometry:</b> Line reversed.</span>
    </div>
  </main>
</section>

<svg class="arrows position-absolute" aria-hidden="true">
  <g stroke="#c92a38" fill="#c92a38"><path d="M455 52L579 172" stroke-width="3.500"/><path d="M587 180l-15-6 6-2 1-7z"/>
  <path d="M730 228L729 372" stroke-width="3" stroke-linecap="round"/><path d="M728.500 381l-6-15 6.500 4 6-4z"/></g>
</svg>
<div class="tip position-absolute" role="tooltip">Reverse line</div>
<svg class="pointer position-absolute" viewBox="0 0 13 18" aria-hidden="true"><path d="M1 1v13l3-3 3 6 3-1-3-6h5z" fill="#111" stroke="#777" stroke-width=".800"/></svg>
</body>
</html>
